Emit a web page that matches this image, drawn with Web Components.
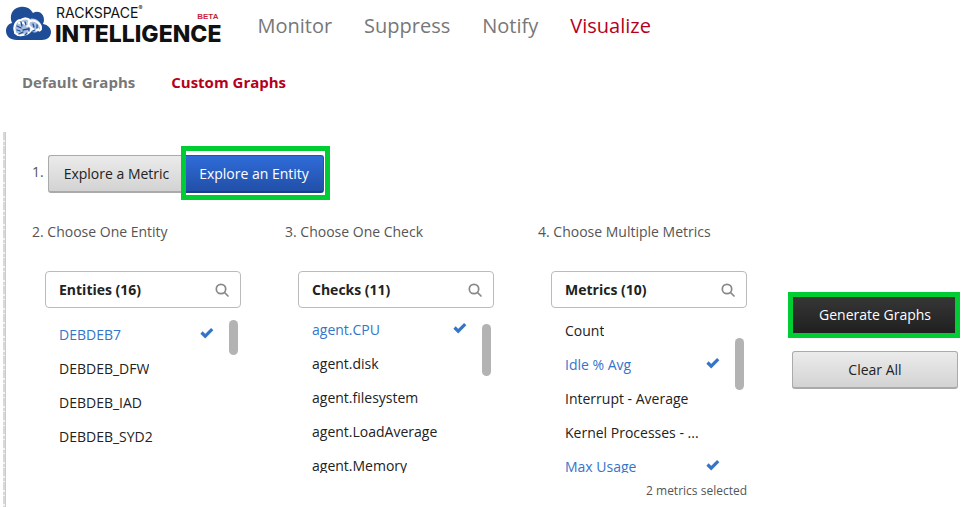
<!DOCTYPE html>
<html lang="en">
<head>
<meta charset="utf-8">
<title>Rackspace Intelligence - Custom Graphs</title>
<style>
  body { margin: 0; background: #fff; color: #222; font: 14px/20px "Open Sans", "Noto Sans", sans-serif; }
</style>
</head>
<body>
<graphs-page></graphs-page>

<script>
const define = (name, html, setup) => {
  const template = document.createElement('template');
  template.innerHTML = html;
  customElements.define(name, class extends HTMLElement {
    constructor() {
      super();
      this.attachShadow({ mode: 'open' }).append(template.content.cloneNode(true));
    }
    connectedCallback() { if (setup) setup(this, this.shadowRoot); }
  });
};

define('brand-logo', `
  <style>
    :host { display: flex; align-items: flex-start; color: #111; }
    svg { width: 45px; height: 34px; flex: none; margin-top: 2px; }
    .words { padding: 0 0 0 4px; }
    .top { display: flex; align-items: flex-end; padding: 0 3px 0 1px; height: 17px; font: 14px/17px "Inter", sans-serif; }
    sup { align-self: flex-start; font-size: 6px; line-height: 8px; }
    .beta { margin-left: auto; font: bold 8px/9px "Liberation Sans", sans-serif; color: #cc1f3c; }
    .name { font: 800 23px/26px "Inter", sans-serif; display: block; }
  </style>
  <svg viewBox="0 0 45 34" aria-hidden="true">
    <path d="M11 34C4 34 0 30 0 25c0-4 2-7 6-8C3 10 6 2 14 1c6-1 10 1 13 6 5-3 11 0 11 7 0 2-1 3-1 4 5 1 8 4 8 8 0 5-4 8-9 8z" fill="#1e4c96"/>
    <path d="M8 25c-1-6 2-11 7-12 3-2 7-2 9 0 6-2 12 4 12 9 0 3-2 4-4 3-2 2-5 2-6 0-2 3-6 5-10 5-4 1-7-1-8-5z" fill="#a9bfdf"/>
    <path d="M9 26c-2-6 1-12 6-12 3-2 7-2 9 1 5-2 11 3 11 7 0 3-2 3-3 1M25 15c-3 0-3 4-1 6 2 1 3 4 7 3M9 27c3 3 9 3 13 0l3-3M13 17c3-1 6 0 8 3" fill="none" stroke="#fff" stroke-width="2" stroke-linecap="round"/>
    <path d="M11 24l3 1M11 20l4 2M15 16l1 4M19 16l1 3M13 28l4-2M17 24l5-1M23 22l0 3M27 18l1 3M31 19l0 3M27 25l2-1M19 29l2-2" fill="none" stroke="#1e4c96" stroke-width="1.300" stroke-linecap="round"/>
  </svg>
  <div class="words">
    <div class="top"><span>RACKSPACE</span><sup>®</sup><span class="beta">BETA</span></div>
    <span class="name">INTELLIGENCE</span>
  </div>`);

define('nav-link', `
  <style>
    :host { display: block; }
    a { color: #777; text-decoration: none; white-space: nowrap; }
    :host([current]) a { color: #b5001d; }
  </style>
  <a href="#"><slot></slot></a>`, (host, root) => {
    if (host.hasAttribute('current')) root.querySelector('a').setAttribute('aria-current', 'page');
  });

define('nav-bar', `
  <style>
    :host { display: block; }
    nav { display: flex; gap: var(--nav-gap, 32px); }
  </style>
  <nav><slot></slot></nav>`);

define('push-button', `
  <style>
    :host { display: block; }
    button {
      display: block; box-sizing: border-box; width: 100%; height: 38px; margin: 0; padding: 0 12px;
      border: 1px solid #aaa; border-bottom-width: 2px; border-radius: 3px;
      background: linear-gradient(#ebebeb, #d3d3d3); color: #222;
      font: 14px/20px "Open Sans", "Noto Sans", sans-serif; white-space: nowrap;
    }
    :host([kind="primary"]) button { background: linear-gradient(#2f6cd9, #224fa8); border-color: #2353ab; border-bottom-color: #1b3f85; color: #fff; border-radius: 0 3px 3px 0; }
    :host([kind="dark"]) button { background: linear-gradient(#363636, #202020); border-color: #1c1c1c; border-bottom-width: 1px; color: #fff; }
    :host([start]) button { border-radius: 3px 0 0 3px; border-right: 0; }
  </style>
  <button type="button"><slot></slot></button>`);

define('call-out', `
  <style>
    :host { display: block; position: relative; }
    i { position: absolute; inset: var(--frame-inset); border: 5px solid #00cc33; pointer-events: none; }
  </style>
  <slot></slot><i></i>`);

define('pick-item', `
  <style>
    :host { display: block; }
    button {
      display: flex; align-items: center; justify-content: space-between; width: 100%; height: 34px;
      border: 0; margin: 0; padding: 0; background: none; color: #222; text-align: left;
      font: 14px/20px "Open Sans", "Noto Sans", sans-serif;
    }
    span { overflow: hidden; text-overflow: ellipsis; white-space: nowrap; }
    svg { display: none; width: 14px; height: 12px; flex: none; margin-bottom: 4px; }
    :host([picked]) button { color: #3575c9; }
    :host([picked]) svg { display: block; }
  </style>
  <button type="button"><span><slot></slot></span>
    <svg viewBox="0 0 14 12" aria-hidden="true"><path d="M1.500 5.500L5.200 9.200L12.200 2.200" fill="none" stroke="#3575c9" stroke-width="3.200"/></svg>
  </button>`, (host, root) => {
    root.querySelector('button').setAttribute('aria-pressed', host.hasAttribute('picked'));
  });

define('pick-list', `
  <style>
    :host { display: block; }
    h2 { margin: 0 0 28px; font-size: 14px; line-height: 22px; font-weight: 400; color: #555; white-space: nowrap; }
    .panel { margin: 0 44px 0 13px; }
    .head {
      display: flex; align-items: center; justify-content: space-between; box-sizing: border-box; height: 37px;
      padding: 0 9px 0 13px; border: 1px solid #bbb; border-radius: 4px;
    }
    h3 { margin: 0; font-size: 14px; line-height: 20px; font-weight: 700; color: #222; }
    .head button { display: block; border: 0; padding: 0; background: none; width: 18px; height: 18px; }
    .head svg { display: block; }
    .body { position: relative; height: 165px; overflow: hidden; }
    .rows { padding: 0 27px 0 14px; margin-top: var(--rows-top, 4px); }
    .thumb { position: absolute; right: 3px; top: var(--thumb-top); width: 9px; height: var(--thumb-height, 52px); border-radius: 5px; background: #b3b3b3; }
    .foot { font-size: 12px; line-height: 16px; color: #555; text-align: right; padding-top: 10px; }
    .foot:empty { display: none; }
  </style>
  <h2></h2>
  <div class="panel">
    <div class="head"><h3></h3>
      <button type="button" aria-label="Search"><svg width="18" height="18" viewBox="0 0 18 18" fill="none" stroke="#888" stroke-width="1.700" aria-hidden="true"><circle cx="8" cy="8" r="4.700"/><path d="M11.500 11.500L15 15" stroke-linecap="round"/></svg></button>
    </div>
    <div class="body"><div class="rows"><slot></slot></div><div class="thumb"></div></div>
    <div class="foot"></div>
  </div>`, (host, root) => {
    root.querySelector('h2').textContent = host.getAttribute('step');
    root.querySelector('h3').textContent = host.getAttribute('heading');
    root.querySelector('.foot').textContent = host.getAttribute('note') || '';
  });

define('graphs-page', `
  <style>
    :host { display: flex; flex-direction: column; min-height: 100vh; }
    header { display: flex; align-items: flex-start; gap: 36px; padding: 4px 6px 0; height: 64px; box-sizing: border-box; }
    header nav-bar { font-size: 20px; line-height: 28px; margin-top: 8px; }
    .sub { --nav-gap: 36px; padding: 8px 22px 0; height: 60px; font-size: 15px; line-height: 20px; font-weight: 700; }
    main {
      flex: 1; padding: 23px 4px 0 32px;
      background:
        linear-gradient(#ccc, #ccc) 5px 0 / 1px 100% no-repeat,
        repeating-linear-gradient(#d8d8d8 0 8px, #f5f5f5 8px 10px, #d8d8d8 10px 13px, #f5f5f5 13px 14px) 3px 0 / 2px 100% no-repeat;
    }
    .mode { display: flex; color: #555; }
    .mode > span { width: 16px; line-height: 34px; }
    .mode push-button[start] { width: 136px; }
    .mode call-out { width: 140px; --frame-inset: -9px -6px -7px -3px; }
    .steps { display: grid; grid-template-columns: repeat(3, minmax(0, 1fr)) 167px; margin-top: 28px; }
    .actions { padding: 75px 0 0 1px; display: flex; flex-direction: column; gap: 17px; }
    .actions call-out { --frame-inset: -4px -2px -4px -4px; }
    .checks { --rows-top: 5px; --thumb-top: 16px; }
    .entities { --rows-top: 10px; --thumb-top: 12px; --thumb-height: 35px; }
    .metrics { --rows-top: 6px; --thumb-top: 30px; }
  </style>
  <header>
    <brand-logo></brand-logo>
    <nav-bar>
      <nav-link>Monitor</nav-link><nav-link>Suppress</nav-link><nav-link>Notify</nav-link><nav-link current>Visualize</nav-link>
    </nav-bar>
  </header>
  <nav-bar class="sub"><nav-link>Default Graphs</nav-link><nav-link current>Custom Graphs</nav-link></nav-bar>
  <main>
    <div class="mode">
      <span>1.</span>
      <push-button start>Explore a Metric</push-button>
      <call-out><push-button kind="primary">Explore an Entity</push-button></call-out>
    </div>
    <div class="steps">
      <pick-list class="entities" step="2. Choose One Entity" heading="Entities (16)">
        <pick-item picked>DEBDEB7</pick-item><pick-item>DEBDEB_DFW</pick-item><pick-item>DEBDEB_IAD</pick-item><pick-item>DEBDEB_SYD2</pick-item>
      </pick-list>
      <pick-list class="checks" step="3. Choose One Check" heading="Checks (11)">
        <pick-item picked>agent.CPU</pick-item><pick-item>agent.disk</pick-item><pick-item>agent.filesystem</pick-item><pick-item>agent.LoadAverage</pick-item><pick-item>agent.Memory</pick-item>
      </pick-list>
      <pick-list class="metrics" step="4. Choose Multiple Metrics" heading="Metrics (10)" note="2 metrics selected">
        <pick-item>Count</pick-item><pick-item picked>Idle % Avg</pick-item><pick-item>Interrupt - Average</pick-item><pick-item>Kernel Processes - ...</pick-item><pick-item picked>Max Usage</pick-item>
      </pick-list>
      <div class="actions">
        <call-out><push-button kind="dark">Generate Graphs</push-button></call-out>
        <push-button>Clear All</push-button>
      </div>
    </div>
  </main>`);
</script>
</body>
</html>
